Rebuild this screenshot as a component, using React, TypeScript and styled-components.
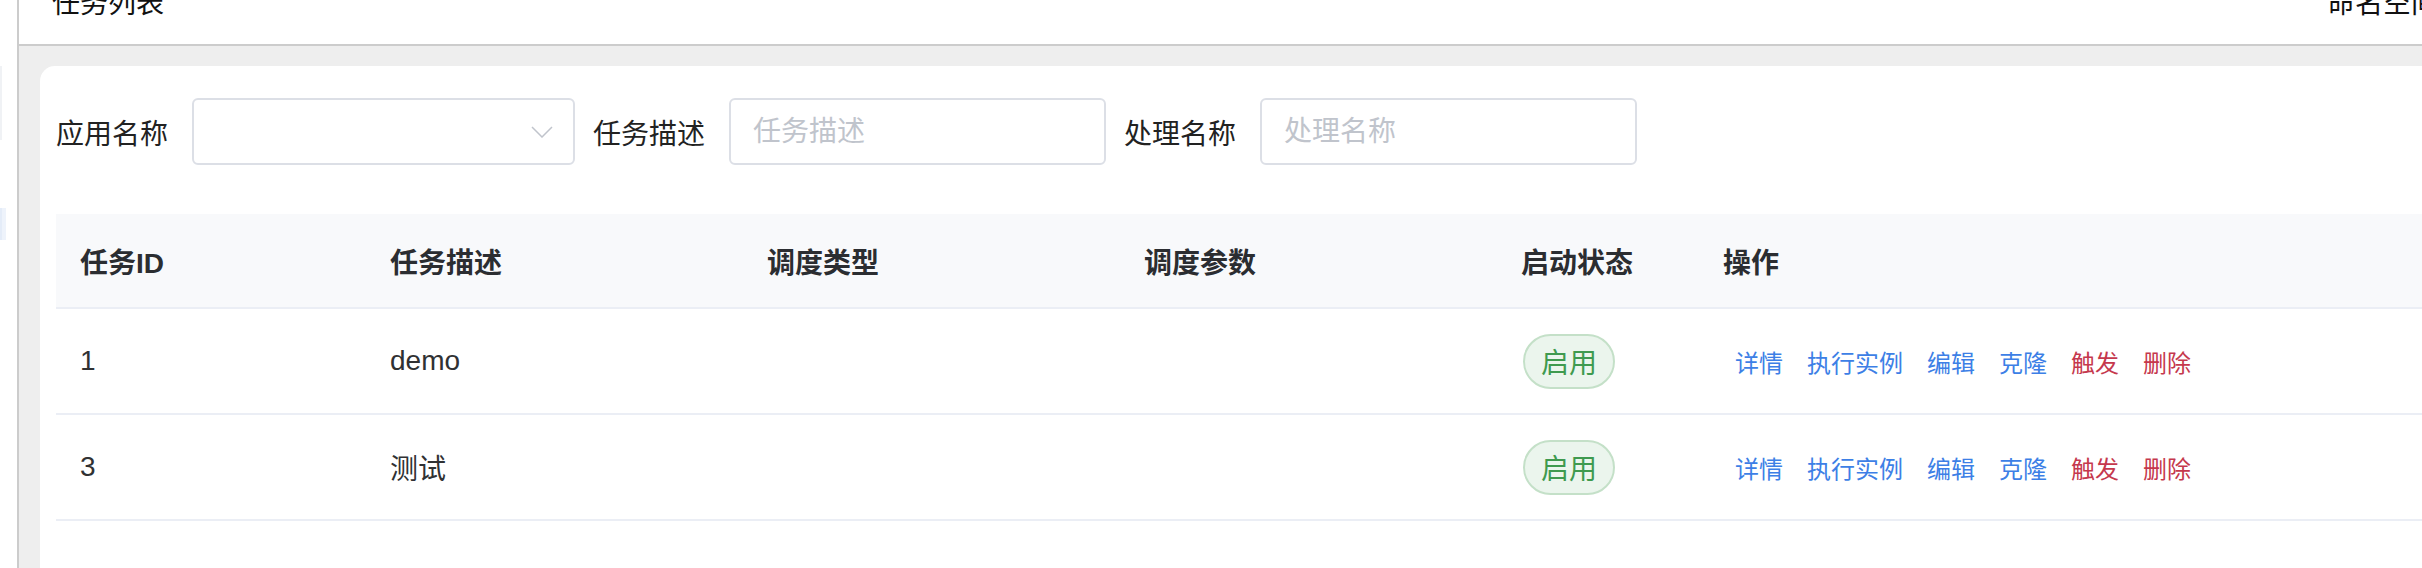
import React from 'react'
import styled, { createGlobalStyle } from 'styled-components'

const GlobalStyle = createGlobalStyle`
  html, body {
    margin: 0;
    padding: 0;
    background: #ffffff;
    overflow: hidden;
  }
  body {
    font-family: "Liberation Sans", "Noto Sans CJK SC", sans-serif;
    color: #303133;
  }
`

type Job = {
  id: number
  desc: string
  scheduleType: string
  scheduleConf: string
  enabled: boolean
}

const jobs: Job[] = [
  { id: 1, desc: 'demo', scheduleType: '', scheduleConf: '', enabled: true },
  { id: 3, desc: '测试', scheduleType: '', scheduleConf: '', enabled: true },
]

const actions = [
  { text: '详情', danger: false },
  { text: '执行实例', danger: false },
  { text: '编辑', danger: false },
  { text: '克隆', danger: false },
  { text: '触发', danger: true },
  { text: '删除', danger: true },
]

const columns = ['任务ID', '任务描述', '调度类型', '调度参数', '启动状态', '操作']

const App = () => (
  <>
    <GlobalStyle />
    <Shell>
      <Sidebar>
        <SideItem $top={66} $height={74} />
        <SideItem $top={68} $height={32} $active />
      </Sidebar>
      <Main>
        <Header>
          <Title>任务列表</Title>
          <Namespace>命名空间</Namespace>
        </Header>
        <Content>
          <Card>
            <FilterRow>
              <FilterLabel>应用名称</FilterLabel>
              <SelectBox>
                <svg width="22" height="12" viewBox="0 0 22 12" fill="none">
                  <polyline points="1,1 11,11 21,1" stroke="#c0c4cc" strokeWidth="1.5" />
                </svg>
              </SelectBox>
              <FilterLabel>任务描述</FilterLabel>
              <TextInput placeholder="任务描述" />
              <FilterLabel>处理名称</FilterLabel>
              <TextInput placeholder="处理名称" />
            </FilterRow>

            <Table>
              <HeadRow>
                {columns.map((c) => (
                  <HeadCell key={c}>{c}</HeadCell>
                ))}
              </HeadRow>
              {jobs.map((job) => (
                <BodyRow key={job.id}>
                  <Cell>{job.id}</Cell>
                  <Cell>{job.desc}</Cell>
                  <Cell>{job.scheduleType}</Cell>
                  <Cell>{job.scheduleConf}</Cell>
                  <Cell>{job.enabled && <Tag>启用</Tag>}</Cell>
                  <Cell>
                    <Actions>
                      {actions.map((a) => (
                        <ActionLink key={a.text} $danger={a.danger}>
                          {a.text}
                        </ActionLink>
                      ))}
                    </Actions>
                  </Cell>
                </BodyRow>
              ))}
            </Table>
          </Card>
        </Content>
      </Main>
    </Shell>
  </>
)

export default App

const Shell = styled.div`
  display: flex;
  width: 2422px;
  height: 568px;
  overflow: hidden;
`

const Sidebar = styled.div`
  display: flex;
  flex-direction: column;
  width: 17px;
  flex-shrink: 0;
  background: #ffffff;
  border-right: 2px solid #cccccc;
`

const SideItem = styled.div<{ $top: number; $height: number; $active?: boolean }>`
  margin-top: ${(p) => p.$top}px;
  height: ${(p) => p.$height}px;
  width: 4px;
  background: ${(p) => (p.$active ? '#eef3fb' : '#ffffff')};
  border-left: 2px solid ${(p) => (p.$active ? '#e4ecf8' : '#f0f2f5')};
`

const Main = styled.div`
  flex: 1;
  display: flex;
  flex-direction: column;
  background: #eeeeee;
  min-width: 0;
`

const Header = styled.div`
  height: 44px;
  flex-shrink: 0;
  display: flex;
  align-items: flex-start;
  padding-left: 33px;
  background: #ffffff;
  border-bottom: 2px solid #cccccc;
  overflow: hidden;
`

const Title = styled.div`
  font-size: 28px;
  line-height: 28px;
  margin-top: -10px;
  color: #111111;
  white-space: nowrap;
`

const Namespace = styled(Title)`
  margin-left: auto;
  margin-right: -17px;
`

const Content = styled.div`
  flex: 1;
  display: flex;
  padding: 20px 0 0 21px;
  min-height: 0;
`

const Card = styled.div`
  flex: 1;
  background: #ffffff;
  border-radius: 15px 0 0 0;
  padding: 32px 0 0 16px;
  min-width: 0;
`

const FilterRow = styled.div`
  display: flex;
  align-items: center;
  height: 67px;
`

const FilterLabel = styled.div`
  font-size: 28px;
  color: #222222;
  margin-right: 24px;
  white-space: nowrap;
`

const SelectBox = styled.div`
  box-sizing: border-box;
  width: 383px;
  height: 67px;
  border: 2px solid #dcdfe6;
  border-radius: 6px;
  margin-right: 18px;
  display: flex;
  align-items: center;
  justify-content: flex-end;
  padding-right: 20px;
  background: #ffffff;
`

const TextInput = styled.input`
  box-sizing: border-box;
  width: 377px;
  height: 67px;
  border: 2px solid #dcdfe6;
  border-radius: 6px;
  margin-right: 18px;
  padding: 0 22px;
  font-family: "Liberation Sans", "Noto Sans CJK SC", sans-serif;
  font-size: 28px;
  color: #303133;
  background: #ffffff;
  outline: none;

  &::placeholder {
    color: #c0c4cc;
  }
`

const Table = styled.div`
  margin-top: 49px;
`

const gridCols = '310px 377px 377px 377px 202px 1fr'

const HeadRow = styled.div`
  display: grid;
  grid-template-columns: ${gridCols};
  height: 93px;
  align-items: center;
  background: #f8f9fb;
  border-bottom: 2px solid #ebeef5;
`

const HeadCell = styled.div`
  padding-left: 24px;
  font-size: 28px;
  font-weight: 600;
  color: #2b2d31;
  white-space: nowrap;
`

const BodyRow = styled.div`
  display: grid;
  grid-template-columns: ${gridCols};
  height: 104px;
  align-items: center;
  border-bottom: 2px solid #ebeef5;
`

const Cell = styled.div`
  padding-left: 24px;
  font-size: 28px;
  color: #303133;
  white-space: nowrap;
`

const Tag = styled.span`
  display: inline-flex;
  align-items: center;
  box-sizing: border-box;
  height: 55px;
  padding: 0 16px;
  margin-left: 2px;
  border: 2px solid #c4e0c8;
  border-radius: 28px;
  background: #ebf5ed;
  color: #3f9a4f;
  font-size: 28px;
`

const Actions = styled.div`
  display: flex;
  gap: 24px;
  margin-left: 12px;
`

const ActionLink = styled.span<{ $danger: boolean }>`
  font-size: 24px;
  color: ${(p) => (p.$danger ? '#c5384d' : '#3d7fe6')};
  cursor: pointer;
`
